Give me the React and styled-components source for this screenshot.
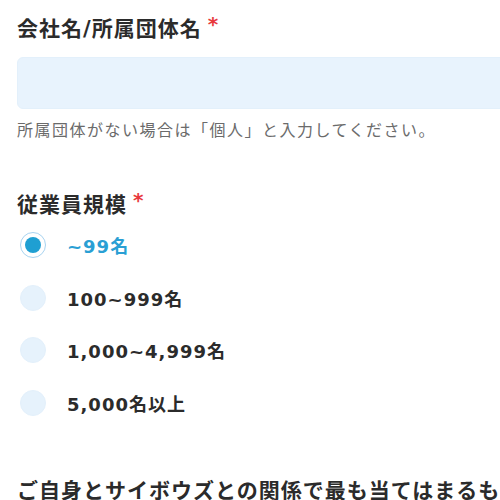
import styled, { createGlobalStyle } from 'styled-components'

const options = ['~99名', '100~999名', '1,000~4,999名', '5,000名以上']

function App() {
  return (
    <>
      <GlobalStyle />
      <Form>
        <Field>
          <Label>会社名/所属団体名<Required>*</Required></Label>
          <TextInput type="text" />
          <Hint>所属団体がない場合は「個人」と入力してください。</Hint>
        </Field>

        <Field $gap={46}>
          <Label>従業員規模<Required>*</Required></Label>
          <RadioList>
            {options.map((opt, i) => (
              <RadioRow key={opt}>
                <RadioDot $checked={i === 0} />
                <RadioText $checked={i === 0}>{opt}</RadioText>
              </RadioRow>
            ))}
          </RadioList>
        </Field>

        <Field $gap={59}>
          <Label>ご自身とサイボウズとの関係で最も当てはまるもの</Label>
        </Field>
      </Form>
    </>
  )
}

const GlobalStyle = createGlobalStyle`
  html, body {
    margin: 0;
    overflow: hidden;
    background: #fff;
  }
  body {
    font-family: "DejaVu Sans", "Noto Sans CJK JP", sans-serif;
    color: #333;
  }
`

const Form = styled.div`
  width: 640px;
  padding: 13px 0 0 17px;
`

const Field = styled.div`
  margin-top: ${p => p.$gap || 0}px;
`

const Label = styled.div`
  font-size: 21px;
  line-height: 32px;
  font-weight: 700;
  letter-spacing: 1px;
  color: #2b2b2b;
  white-space: nowrap;
`

const Required = styled.span`
  color: #e8383d;
  font-size: 20px;
  font-weight: 700;
  margin-left: 6px;
  position: relative;
  top: -5px;
`

const TextInput = styled.input`
  display: block;
  box-sizing: border-box;
  width: 100%;
  height: 52px;
  margin-top: 12px;
  border: 1px solid #e3f0fb;
  border-radius: 6px;
  background: #e8f3fd;
  outline: none;
`

const Hint = styled.p`
  margin: 10px 0 0;
  font-size: 16px;
  line-height: 24px;
  letter-spacing: 1.5px;
  color: #6b6b6b;
`

const RadioList = styled.div`
  display: flex;
  flex-direction: column;
  gap: 26.6px;
  margin-top: 11px;
  padding-left: 3px;
`

const RadioRow = styled.label`
  display: flex;
  align-items: center;
  height: 26px;
  gap: 21px;
`

const RadioDot = styled.span`
  box-sizing: border-box;
  width: 26px;
  height: 26px;
  border-radius: 50%;
  flex: none;
  background: ${p => (p.$checked ? '#fff' : '#e6f2fc')};
  border: 1px solid ${p => (p.$checked ? '#a8d3f0' : '#e3f0fb')};
  display: flex;
  align-items: center;
  justify-content: center;

  &::after {
    content: '';
    display: ${p => (p.$checked ? 'block' : 'none')};
    width: 16px;
    height: 16px;
    border-radius: 50%;
    background: #1f9fd2;
  }
`

const RadioText = styled.span`
  font-size: 18px;
  font-weight: 700;
  letter-spacing: 1px;
  color: ${p => (p.$checked ? '#2a9fd4' : '#2b2b2b')};
`

export default App
